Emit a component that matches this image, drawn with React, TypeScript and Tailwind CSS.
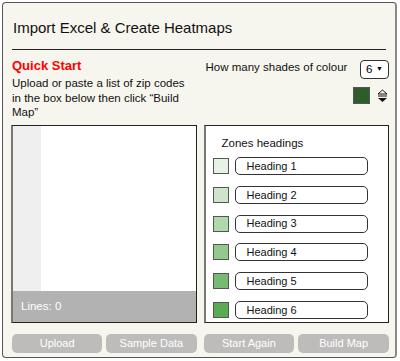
const shades = ['#e6f2e4', '#cde5ca', '#b1d7ad', '#93c88e', '#77ba71', '#5bab55'];

const Btn = ({ label }: { label: string }) => (
  <button className="flex-1 h-[19px] rounded-[5px] bg-[#bdbcbb] text-white text-[11px] leading-none">
    {label}
  </button>
);

export default function App() {
  return (
    <div className="w-[400px] h-[361px] bg-white p-[2px] font-['Liberation_Sans',Arial,sans-serif]">
      <div className="w-[395px] h-[356px] bg-[#f7f6ee] border border-[#555] border-r-[2px] border-r-[#888] rounded-[4px] flex flex-col">
        <div className="h-[47px] mx-[9px] border-b border-[#222] pl-[1px] pt-[16px]">
          <h1 className="text-[15px] leading-[17px] text-[#111]">Import Excel &amp; Create Heatmaps</h1>
        </div>

        <div className="flex gap-[7px] pl-[8px] pr-[6px]">
          <div className="w-[186px] flex flex-col">
            <div className="h-[75px] pt-[8px] pl-[1px]">
              <div className="text-[13px] font-bold text-[#f00] leading-[15px]">Quick Start</div>
              <p className="mt-[3px] text-[11.5px] leading-[14.5px] text-[#111]">
                Upload or paste a list of zip codes in the box below then click “Build Map”
              </p>
            </div>
            <div className="h-[198px] border border-[#222] border-l-[2px] border-l-[#777] bg-white flex flex-col">
              <div className="flex-1 flex">
                <div className="w-[28px] bg-[#efefef]" />
                <div className="flex-1" />
              </div>
              <div className="h-[31px] bg-[#b3b2b2] flex items-center pl-[8px] text-[11.5px] text-white">Lines: 0</div>
            </div>
            <div className="flex gap-[4px] mt-[11px] pl-[1px]">
              <Btn label="Upload" />
              <Btn label="Sample Data" />
            </div>
          </div>

          <div className="w-[186px] flex flex-col">
            <div className="h-[75px] pt-[10px] pl-[2px]">
              <div className="flex justify-between items-start">
                <span className="text-[11.5px] leading-[14px] text-[#111]">How many shades of colour</span>
                <div className="w-[29px] h-[19px] border border-[#333] rounded-[4px] bg-white flex items-center justify-between px-[5px] text-[11.5px]">
                  <span>6</span>
                  <span className="text-[7px]">▼</span>
                </div>
              </div>
              <div className="flex justify-end items-center gap-[7px] mt-[8px] pr-[1px]">
                <div className="w-[17px] h-[17px] bg-[#2d5d2a] border border-[#555]" />
                <svg width="11" height="14" viewBox="0 0 11 14">
                  <path d="M5.5 1 L10 5 H1 Z" fill="none" stroke="#111" strokeWidth="1" />
                  <path d="M1 9 H10 L5.5 13 Z" fill="#111" />
                  <line x1="1" y1="7" x2="10" y2="7" stroke="#111" strokeWidth="1" />
                </svg>
              </div>
            </div>
            <div className="h-[198px] border border-[#222] border-l-[2px] border-l-[#777] bg-white pl-[7px] pr-[20px] pt-[10px]">
              <div className="text-[11.5px] leading-[14px] text-[#111] pl-[9px]">Zones headings</div>
              <div className="flex flex-col gap-[10.8px] mt-[7px]">
                {shades.map((c, i) => (
                  <div key={c} className="flex items-center gap-[6px] h-[18px]">
                    <div className="w-[16px] h-[16px] border border-[#555]" style={{ backgroundColor: c }} />
                    <div className="flex-1 h-[18px] border border-[#333] rounded-[5px] bg-white flex items-center pl-[11px] text-[11px] text-[#111]">
                      Heading {i + 1}
                    </div>
                  </div>
                ))}
              </div>
            </div>
            <div className="flex gap-[4px] mt-[11px]">
              <Btn label="Start Again" />
              <Btn label="Build Map" />
            </div>
          </div>
        </div>
      </div>
    </div>
  );
}
